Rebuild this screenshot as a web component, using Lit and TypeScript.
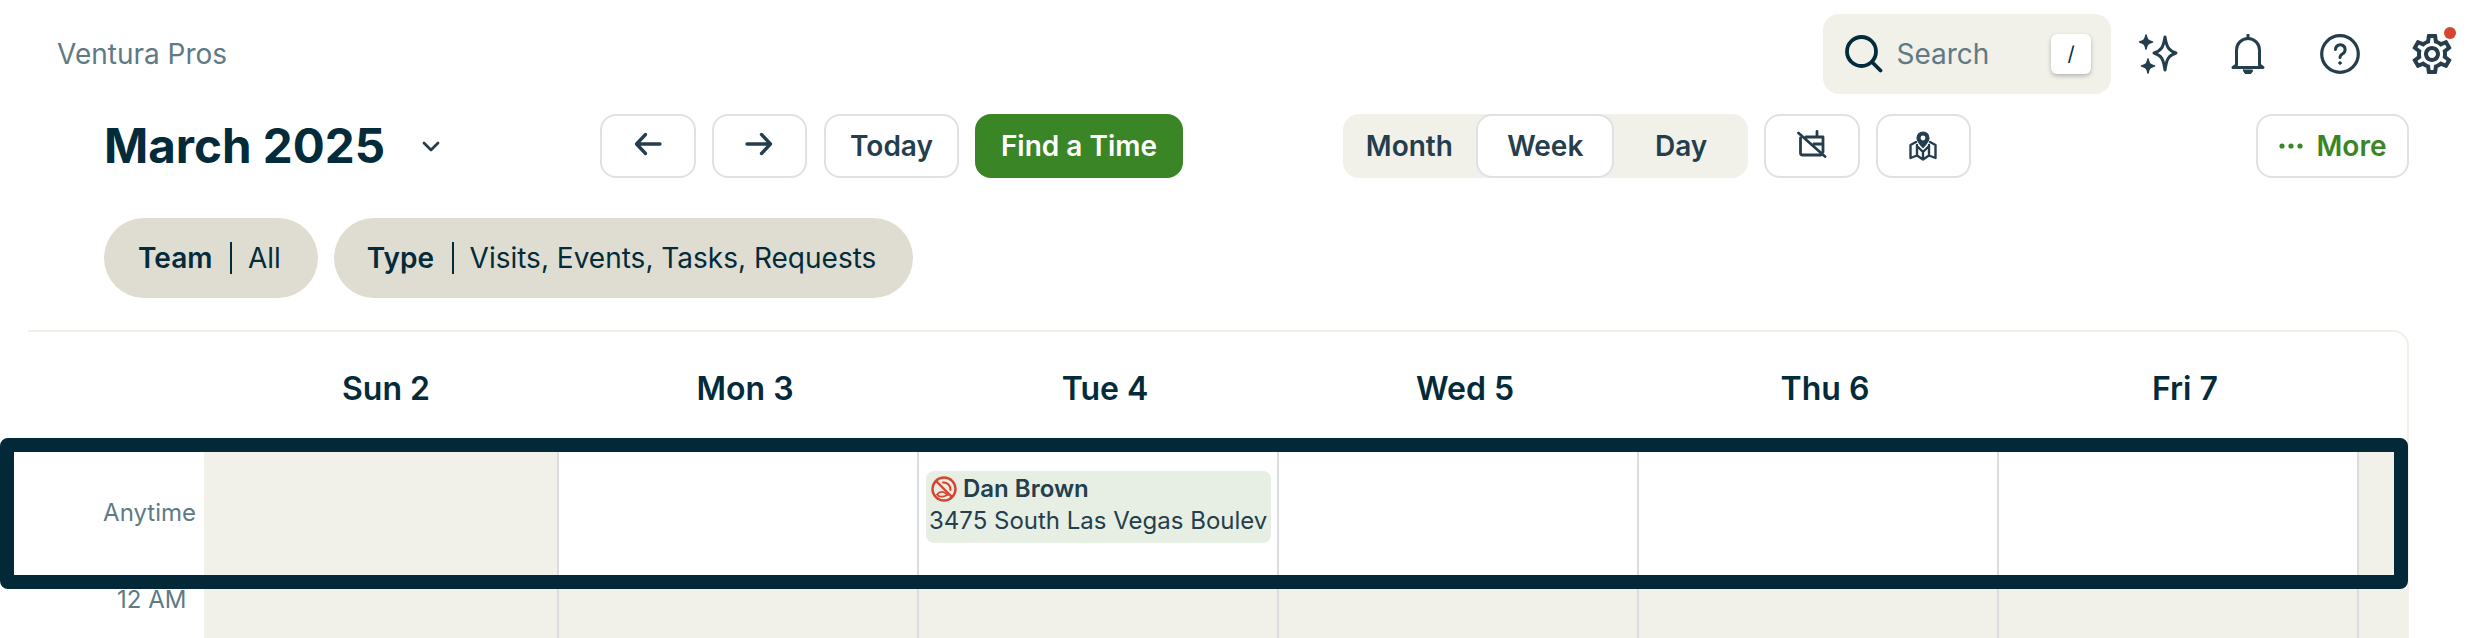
import { LitElement, html, css, svg } from "lit";
import { customElement } from "lit/decorators.js";

const GEAR = "M19.43 12.98c.04-.32.07-.64.07-.98 0-.34-.03-.66-.07-.98l2.11-1.65c.19-.15.24-.42.12-.64l-2-3.46c-.09-.16-.26-.25-.44-.25-.06 0-.12.01-.17.03l-2.49 1c-.52-.4-1.08-.73-1.69-.98l-.38-2.65C14.46 2.18 14.25 2 14 2h-4c-.25 0-.46.18-.49.42l-.38 2.65c-.61.25-1.17.59-1.69.98l-2.49-1c-.06-.02-.12-.03-.18-.03-.17 0-.34.09-.43.25l-2 3.46c-.13.22-.07.49.12.64l2.11 1.65c-.04.32-.07.65-.07.98 0 .33.03.66.07.98l-2.11 1.65c-.19.15-.24.42-.12.64l2 3.46c.09.16.26.25.44.25.06 0 .12-.01.17-.03l2.49-1c.52.4 1.08.73 1.69.98l.38 2.65c.03.24.24.42.49.42h4c.25 0 .46-.18.49-.42l.38-2.65c.61-.25 1.17-.59 1.69-.98l2.49 1c.06.02.12.03.18.03.17 0 .34-.09.43-.25l2-3.46c.12-.22.07-.49-.12-.64l-2.11-1.65zm-1.98-1.71c.04.31.05.52.05.73 0 .21-.02.43-.05.73l-.14 1.13.89.7 1.08.84-.7 1.21-1.27-.51-1.04-.42-.9.68c-.43.32-.84.56-1.25.73l-1.06.43-.16 1.13-.2 1.35h-1.4l-.19-1.35-.16-1.13-1.06-.43c-.43-.18-.83-.41-1.23-.71l-.91-.7-1.06.43-1.27.51-.7-1.21 1.08-.84.89-.7-.14-1.13c-.03-.31-.05-.54-.05-.74s.02-.43.05-.73l.14-1.13-.89-.7-1.08-.84.7-1.21 1.27.51 1.04.42.9-.68c.43-.32.84-.56 1.25-.73l1.06-.43.16-1.13.2-1.35h1.39l.19 1.35.16 1.13 1.06.43c.43.18.83.41 1.23.71l.91.7 1.06-.43 1.27-.51.7 1.21-1.07.85-.89.7.14 1.13zM12 8c-2.21 0-4 1.79-4 4s1.79 4 4 4 4-1.79 4-4-1.79-4-4-4zm0 6c-1.1 0-2-.9-2-2s.9-2 2-2 2 .9 2 2-.9 2-2 2z";

const ic = (w: number, h: number, body: unknown, cls = "") => html`<svg class=${cls} width=${w} height=${h} viewBox="0 0 ${w} ${h}" fill="none" stroke="currentColor" stroke-width="3" stroke-linecap="round" stroke-linejoin="round">${body}</svg>`;

const days = ["Sun 2", "Mon 3", "Tue 4", "Wed 5", "Thu 6", "Fri 7"];

@customElement("app-root")
export class AppRoot extends LitElement {
  static styles = css`
    :host { display: block; width: 2480px; height: 638px; overflow: hidden; background: #fff; font-family: Inter, "Liberation Sans", sans-serif; color: #032b3a; position: relative; padding-top: 14px; box-sizing: border-box; }
    svg { display: block; flex: none; }
    .top { display: flex; align-items: center; height: 80px; padding: 0 28px 0 57px; }
    .org { font-size: 28px; color: #5f7a85; flex: 1; }
    .search { width: 288.5px; height: 80px; box-sizing: border-box; background: #f1f0e9; border-radius: 16px; display: flex; align-items: center; padding: 0 20px 0 22px; color: #032b3a; }
    .search .ph { font-size: 28px; color: #5f7a85; margin-left: 14px; flex: 1; }
    .key { width: 40px; height: 40px; background: #fff; border-radius: 6px; box-shadow: 0 2px 4px rgba(0,0,0,.25); display: flex; align-items: center; justify-content: center; font-size: 20px; color: #032b3a; }
    .tops { display: flex; align-items: center; color: #243e4d; margin-left: 27px; gap: 52px; }
    .tops .bell { margin-left: -2px; }
    .tools { display: flex; align-items: center; height: 64px; margin-top: 20px; padding-left: 104px; gap: 16px; }
    .title { font-size: 47.5px; font-weight: 700; width: 336px; white-space: nowrap; line-height: 64px; display: flex; align-items: center; justify-content: space-between; color: #032b3a; margin-right: 144px; box-sizing: border-box; }
    .chev { color: #243e4d; }
    .btn { box-sizing: border-box; height: 64px; border: 2.5px solid #dde2e6; border-radius: 16px; background: #fff; display: flex; align-items: center; justify-content: center; font-size: 28px; font-weight: 600; color: #243e4d; }
    .b95 { width: 95.5px; }
    .today { width: 135px; margin-left: 1px; }
    .find { width: 208px; background: #3a8525; border-color: #3a8525; color: #fff; }
    .up5 { margin-bottom: 5px; }
    .up3 { margin-bottom: 3px; }
    .up1 { margin-bottom: 1px; }
    .seg { width: 405.5px; height: 64px; margin-left: 143.5px; background: #f1f0e9; border-radius: 16px; display: flex; }
    .seg div { flex: 1; box-sizing: border-box; display: flex; align-items: center; justify-content: center; font-size: 28px; font-weight: 600; color: #243e4d; border-radius: 16px; }
    .seg .on { background: #fff; border: 2.5px solid #dde2e6; }
    .more { width: 153px; color: #3a8525; gap: 14px; margin-left: auto; margin-right: 71px; }
    .filters { display: flex; gap: 16px; margin-top: 40px; padding-left: 104px; height: 80px; }
    .pill { background: #dfddd2; border-radius: 40px; height: 80px; padding: 0 37px 0 34px; display: flex; align-items: center; font-size: 28px; color: #032b3a; }
    .pill:last-child { padding-left: 33px; }
    .pill b { font-weight: 600; }
    .pill i { width: 2.5px; height: 32px; background: #032b3a; margin: 0 15.5px 0 17.5px; }
    .card { margin: 32px 0 0 28px; width: 2381px; box-sizing: border-box; height: 308px; border-top: 2.5px solid #f0f0e8; border-right: 2.5px solid #f0f0e8; border-top-right-radius: 16px; overflow: hidden; display: flex; flex-direction: column; }
    .heads, .row { display: grid; grid-template-columns: 176px 355px repeat(5, 360px) 1fr; }
    .heads { height: 119px; flex: none; font-size: 32px; font-weight: 600; align-items: center; text-align: center; color: #032b3a; }
    .heads div { position: relative; left: 6px; padding-bottom: 6px; }
    .heads div:nth-child(2) { left: 4.5px; }
    .row { height: 123.5px; flex: none; }
    .row.rest { flex: 1; height: auto; margin-top: 14px; }
    .lab { font-size: 24px; color: #5f7a85; display: flex; align-items: center; justify-content: flex-end; padding-right: 8px; }
    .rest .lab { align-items: flex-start; padding-right: 17.5px; line-height: 26px; margin-top: -2px; }
    .c { box-sizing: border-box; border-right: 2.5px solid #d9dde0; background: #fff; padding: 20px 6px 0 6.5px; min-width: 0; }
    .c.off { background: #f1f0e9; }
    .c.end { border-right: 0; }
    .ev { background: #e7eee3; border-radius: 8px; height: 72px; padding: 0 2px 0 3.5px; overflow: hidden; box-sizing: border-box; font-size: 24px; color: #243e4d; line-height: 31px; white-space: nowrap; }
    .ev .n { display: flex; align-items: center; font-weight: 600; height: 35px; box-sizing: border-box; color: #243e4d; gap: 6px; padding-left: 2px; }
    .ev .a { margin-top: -1px; }
    .frame { position: absolute; left: 0; top: 437.5px; width: 2408px; height: 151.5px; box-sizing: border-box; border: 14px solid #032838; border-radius: 8px; pointer-events: none; }
    .dot { position: absolute; left: 2444px; top: 27px; width: 12px; height: 12px; border-radius: 50%; background: #d6452f; }
  `;

  render() {
    return html`
      <div class="top">
        <div class="org">Ventura Pros</div>
        <div class="search">
          ${ic(38, 38, svg`<circle cx="16.500" cy="16.500" r="14.500" stroke-width="3.800"/><path d="M27 27l8.500 8.500" stroke-width="3.800"/>`)}
          <span class="ph">Search</span>
          <span class="key">/</span>
        </div>
        <div class="tops">
          ${ic(40, 40, svg`<path d="M27 3c1.600 10 3.500 13.500 11 16-7.500 2.500-9.400 6-11 17-1.600-11-3.500-14.500-11-17 7.500-2.500 9.400-6 11-16z"/><path fill="currentColor" stroke-width="1.500" d="M8 1c.8 4.500 1.800 5.800 6.500 7-4.700 1.200-5.700 2.500-6.500 7-.8-4.500-1.800-5.800-6.500-7 4.700-1.200 5.700-2.500 6.500-7zM10 25c.8 4.500 1.800 5.800 6.500 7-4.700 1.200-5.700 2.500-6.500 7-.8-4.500-1.800-5.800-6.500-7 4.700-1.200 5.700-2.500 6.500-7z"/>`)}
          ${ic(40, 40, svg`<path d="M8.500 31V16a11.500 11.500 0 0 1 23 0v15l3.500 2.500H5z"/><path d="M20 1v3"/><path fill="currentColor" stroke-width="1" d="M15.500 36h9a4.500 4.500 0 0 1-9 0z"/>`, "bell")}
          ${ic(40, 40, svg`<circle cx="20" cy="20" r="18.300" stroke-width="3.200"/><path d="M15.500 15.500a4.800 4.800 0 1 1 7.200 4.200c-1.700 1-2.700 1.800-2.700 3.800"/><circle cx="20" cy="29" r="1.300" fill="currentColor" stroke-width="1"/>`)}
          <svg width="40" height="40" viewBox="2 2 20 20" fill="currentColor"><path d=${GEAR}/></svg>
        </div>
      </div>
      <div class="dot"></div>
      <div class="tools">
        <div class="title"><span>March 2025</span>${ic(18, 11, svg`<path d="M2 2l7 7 7-7" stroke-width="2.800"/>`, "chev")}</div>
        <div class="btn b95">${ic(28, 24, svg`<path d="M26 12H3M11.500 2.500L2.500 12l9 9.500" stroke-width="3.300"/>`, "up5")}</div>
        <div class="btn b95">${ic(28, 24, svg`<path d="M2 12h23M16.500 2.500l9 9.500-9 9.500" stroke-width="3.300"/>`, "up5")}</div>
        <div class="btn today">Today</div>
        <div class="btn find">Find a Time</div>
        <div class="seg"><div>Month</div><div class="on">Week</div><div>Day</div></div>
        <div class="btn b95">${ic(30, 30, svg`<path d="M3.500 8v15a2 2 0 0 0 2 2H24M9 7h17v15M20 1.500V7M17 14h9M1.500 3L28 26.500" stroke-width="2.800"/>`, "up3")}</div>
        <div class="btn b95">${ic(30, 30, svg`<path d="M8 11l-5.500 3v13L9 24.500l6 4 6-4 6.500 2.500V14L22 11M9 14v10.500M21 14v10.500M9 15l6 6 6-6M15 21v7.500" stroke-width="2.400"/><path fill="currentColor" stroke-width="1.200" d="M15 1a6 6 0 0 0-6 6c0 3.500 6 9.500 6 9.500s6-6 6-9.500a6 6 0 0 0-6-6z"/><circle cx="15" cy="7" r="2.400" fill="#fff" stroke="none"/>`, "up1")}</div>
        <div class="btn more">
          <svg width="24" height="8" viewBox="0 0 24 8" fill="currentColor"><circle cx="3" cy="4" r="2.600"/><circle cx="12" cy="4" r="2.600"/><circle cx="21" cy="4" r="2.600"/></svg>
          More
        </div>
      </div>
      <div class="filters">
        <div class="pill"><b>Team</b><i></i>All</div>
        <div class="pill"><b>Type</b><i></i>Visits, Events, Tasks, Requests</div>
      </div>
      <div class="card">
        <div class="heads"><div></div>${days.map((d) => html`<div>${d}</div>`)}<div></div></div>
        <div class="row">
          <div class="lab">Anytime</div>
          <div class="c off"></div>
          <div class="c"></div>
          <div class="c">
            <div class="ev">
              <div class="n">
                <svg width="26" height="26" viewBox="0 0 26 26" fill="none" stroke="#d6452f" stroke-width="2.400" stroke-linecap="round">
                  <circle cx="13" cy="13" r="11.500"/>
                  <path d="M5 5l16 16"/>
                  <path d="M12 6.500a7 7 0 0 1 7.500 7.500" stroke-width="2"/>
                  <path d="M6 18.500c2-2.500 5-3 7.500-2l3 2.500-4 1.500c-2.500.5-5 0-6.500-2z" stroke-width="1.800"/>
                </svg>
                Dan Brown
              </div>
              <div class="a">3475 South Las Vegas Boulev</div>
            </div>
          </div>
          <div class="c"></div>
          <div class="c"></div>
          <div class="c"></div>
          <div class="c off end"></div>
        </div>
        <div class="row rest">
          <div class="lab">12 AM</div>
          ${[0, 1, 2, 3, 4, 5].map(() => html`<div class="c off"></div>`)}
          <div class="c off end"></div>
        </div>
      </div>
      <div class="frame"></div>
    `;
  }
}
